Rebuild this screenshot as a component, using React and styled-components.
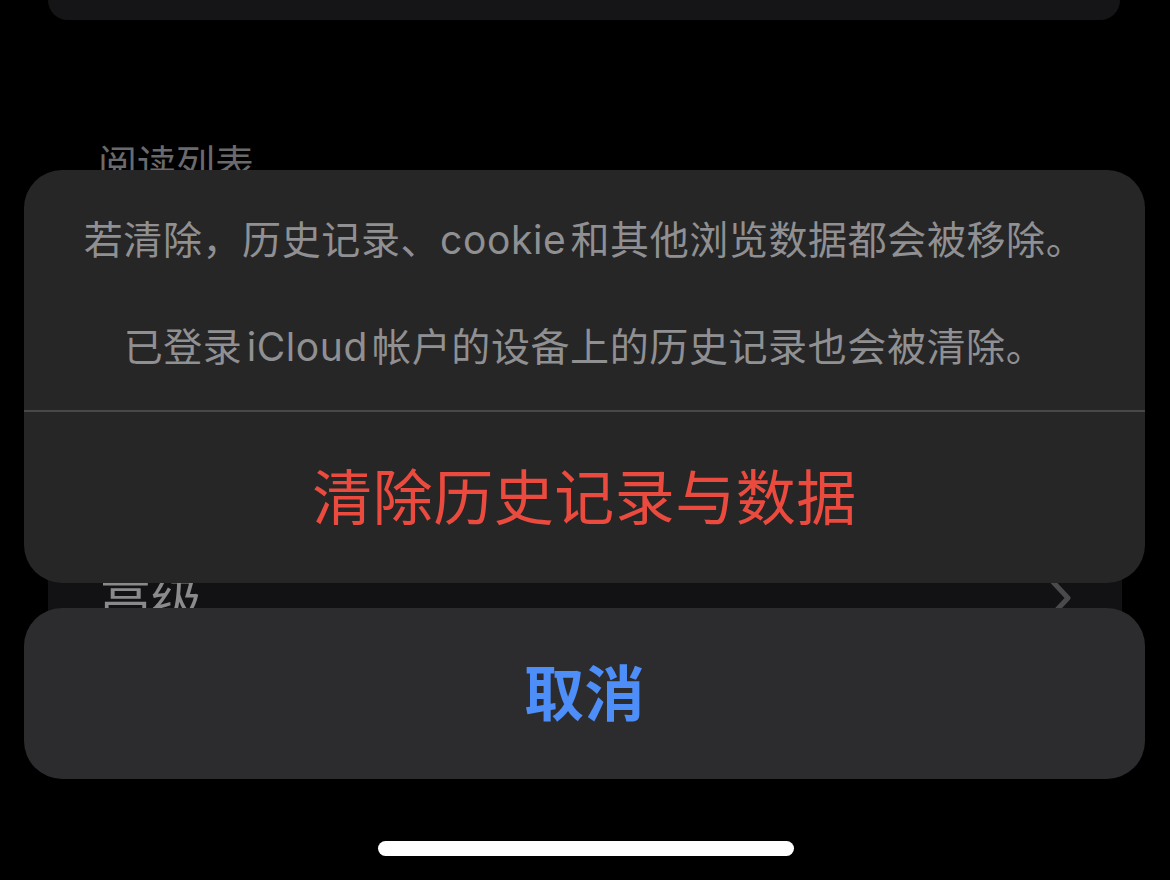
import styled, { createGlobalStyle } from 'styled-components';

const GlobalStyle = createGlobalStyle`
  html, body {
    margin: 0;
    padding: 0;
    background: #000;
  }
  body {
    font-family: "Inter", "Noto Sans CJK SC", sans-serif;
    -webkit-font-smoothing: antialiased;
  }
`;

const Screen = styled.div`
  position: relative;
  width: 1170px;
  height: 880px;
  overflow: hidden;
  background: #000;
`;

/* settings page lying under the action sheet (already dimmed) */
const Settings = styled.div`
  display: flex;
  flex-direction: column;
`;

const TopCard = styled.div`
  height: 20px;
  margin: 0 50px 0 48px;
  background: #151517;
  border-radius: 0 0 36px 36px;
`;

const SectionHeader = styled.div`
  margin: 121px 0 0 98px;
  font-size: 39px;
  line-height: 46px;
  color: #6a6a6c;
`;

const Card = styled.div`
  margin: ${(p) => p.$top || 0}px 48px 0 48px;
  background: #121214;
  border-radius: 30px;
  overflow: hidden;
`;

const Row = styled.div`
  height: 132px;
  display: flex;
  align-items: center;
  justify-content: space-between;
  padding: 0 52px;
  font-size: 51px;
  color: #8a8a8c;
`;

const Chevron = styled.svg`
  width: 22px;
  height: 38px;
  margin-right: -2px;
`;

const SectionFooter = styled.div`
  margin: 18px 98px 0 98px;
  font-size: 39px;
  line-height: 54px;
  color: #6a6a6c;
`;

/* action sheet overlay */
const Sheet = styled.div`
  position: absolute;
  left: 24px;
  right: 25px;
  top: 170px;
  display: flex;
  flex-direction: column;
`;

const Group = styled.div`
  background: #262627;
  border-radius: 38px;
  overflow: hidden;
`;

const Message = styled.div`
  padding: 43px 30px 36px;
  text-align: center;
  font-size: 39px;
  line-height: 54px;
  letter-spacing: 0.6px;
  color: #909092;

  p {
    margin: 0;
  }
  p + p {
    margin-top: 53px;
  }
`;

const Divider = styled.div`
  height: 2px;
  background: #48484a;
`;

const ActionButton = styled.div`
  height: 171px;
  box-sizing: border-box;
  padding-bottom: 9px;
  display: flex;
  align-items: center;
  justify-content: center;
  font-size: 60px;
  letter-spacing: 0.5px;
  font-weight: ${(p) => (p.$bold ? 600 : 400)};
  color: ${(p) => p.$color};
  background: ${(p) => p.$bg || 'transparent'};
  border-radius: ${(p) => (p.$bg ? '38px' : '0')};
  margin-top: ${(p) => p.$gap || 0}px;
`;

const HomeIndicator = styled.div`
  align-self: center;
  width: 416px;
  height: 15px;
  margin-top: 62px;
  margin-left: 2px;
  border-radius: 8px;
  background: #fff;
`;

export default function App() {
  return (
    <Screen>
      <GlobalStyle />
      <Settings>
        <TopCard />
        <SectionHeader>阅读列表</SectionHeader>
        <Card $top={6}>
          <Row>自动存储以供离线阅读</Row>
        </Card>
        <SectionFooter>自动存储 iCloud 中的所有阅读列表项目以供离线阅读。</SectionFooter>
        <Card $top={135}>
          <Row>
            <span>高级</span>
            <Chevron viewBox="0 0 22 38" fill="none">
              <path d="M3 3 L18 19 L3 35" stroke="#4a4a4c" strokeWidth="5" strokeLinecap="round" strokeLinejoin="round" />
            </Chevron>
          </Row>
        </Card>
      </Settings>

      <Sheet>
        <Group>
          <Message>
            <p>若清除，历史记录、cookie{'\u200a'}和其他浏览数据都会被移除。</p>
            <p>已登录{'\u200a'}iCloud{'\u200a'}帐户的设备上的历史记录也会被清除。</p>
          </Message>
          <Divider />
          <ActionButton $color="#eb4a3e">清除历史记录与数据</ActionButton>
        </Group>
        <ActionButton $bold $gap={25} $bg="#2c2c2e" $color="#4d8ef8">取消</ActionButton>
        <HomeIndicator />
      </Sheet>
    </Screen>
  );
}
